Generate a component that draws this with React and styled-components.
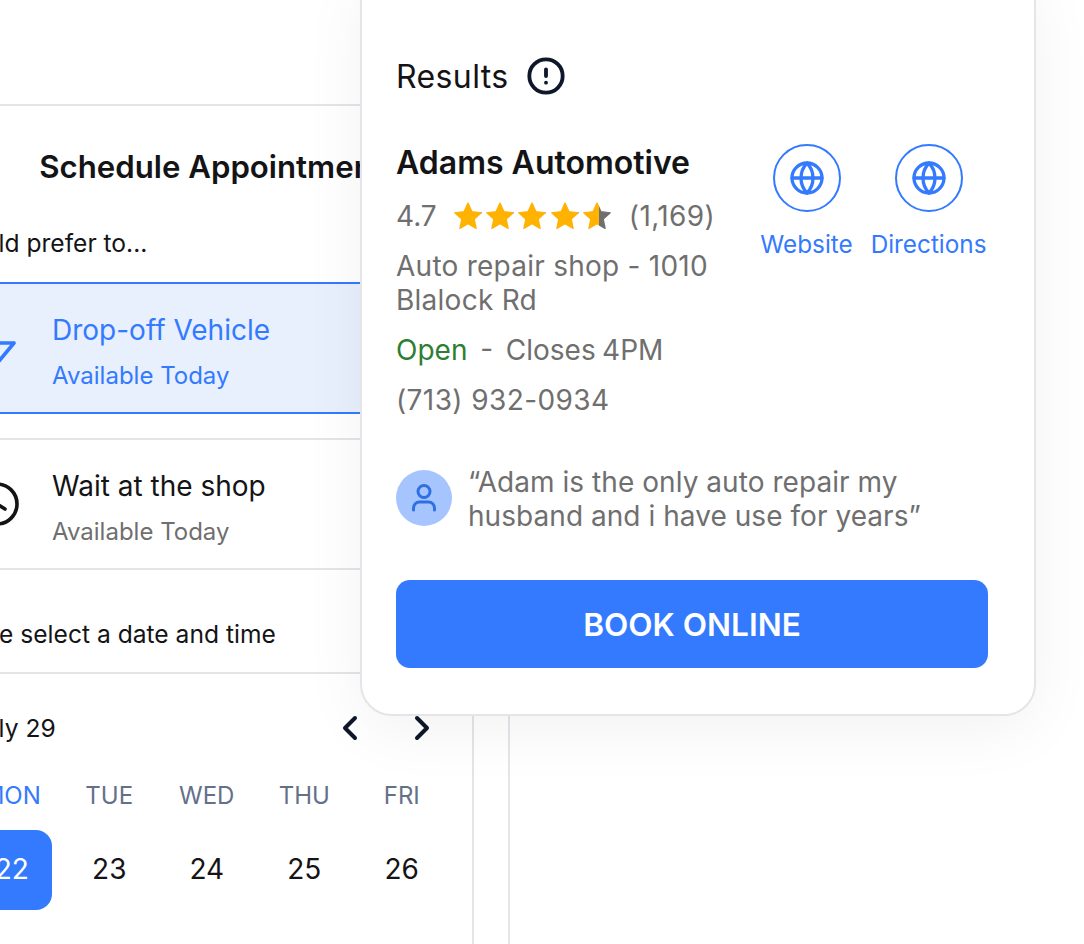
import React from "react";
import styled, { createGlobalStyle } from "styled-components";
import { ChevronLeft, ChevronRight, CircleAlert, Globe } from "lucide-react";

const BLUE = "#337aff";
const INK = "#141416";
const GREY = "#6f6f6f";
const NAVY = "#0f172a";
const LINE = "#e4e4e9";

const GlobalStyle = createGlobalStyle`
  html, body {
    margin: 0;
    background: #fff;
  }
  * {
    box-sizing: border-box;
  }
`;

const Stage = styled.div`
  position: relative;
  width: 1084px;
  height: 944px;
  overflow: hidden;
  font-family: Inter, "Liberation Sans", sans-serif;
  color: ${INK};
`;

const Backdrop = styled.div`
  display: flex;
  width: 510px;
  height: 100%;
  padding-top: 104px;
  padding-right: 34px;
  border-right: 2px solid ${LINE};
`;

const Sheet = styled.section`
  flex: none;
  width: 540px;
  margin-left: -66px;
  border-top: 2px solid ${LINE};
  border-right: 2px solid ${LINE};
`;

const SheetTitle = styled.h2`
  margin: 0;
  padding: 43px 0 0 17px;
  font-size: 31.2px;
  line-height: 36px;
  font-weight: 600;
  text-align: center;
  white-space: nowrap;
`;

const Prompt = styled.p`
  margin: 42px 0 23px;
  padding-left: 2px;
  font-size: 24.6px;
  line-height: 32px;
  white-space: nowrap;
`;

const OptionList = styled.div`
  display: flex;
  flex-direction: column;
  gap: 24px;
`;

const Option = styled.div`
  display: flex;
  align-items: center;
  gap: 32px;
  height: 132px;
  padding-left: 38px;
  border-top: 2px solid ${({ $active }) => ($active ? BLUE : LINE)};
  border-bottom: 2px solid ${({ $active }) => ($active ? BLUE : LINE)};
  background: ${({ $active }) => ($active ? "#e8f0fe" : "transparent")};
  color: ${({ $active }) => ($active ? BLUE : INK)};
`;

const OptionIcon = styled.svg`
  flex: none;
  width: 48px;
  height: 48px;
  fill: none;
  stroke: currentColor;
  stroke-width: 3.6;
  stroke-linecap: round;
  stroke-linejoin: round;
`;

const OptionText = styled.div`
  display: flex;
  flex-direction: column;
  gap: 12px;
  padding-top: 8px;
`;

const OptionTitle = styled.div`
  font-size: 28px;
  line-height: 36px;
  white-space: nowrap;
`;

const OptionSub = styled.div`
  font-size: 24px;
  line-height: 32px;
  white-space: nowrap;
  color: ${({ $active }) => ($active ? BLUE : GREY)};
`;

const DateHeading = styled.div`
  padding: 48px 0 22px 2px;
  border-bottom: 2px solid ${LINE};
  font-size: 24.6px;
  line-height: 32px;
  white-space: nowrap;
`;

const Calendar = styled.div`
  padding: 34px 30px 0 29px;
`;

const MonthRow = styled.div`
  display: flex;
  align-items: center;
  justify-content: space-between;
  height: 40px;
  padding-left: 7px;
  font-size: 24.6px;
  white-space: nowrap;
`;

const MonthNav = styled.div`
  display: flex;
  gap: 32px;
  color: ${NAVY};
`;

const DayGrid = styled.div`
  display: grid;
  grid-template-columns: repeat(5, 97.5px);
  justify-items: center;
  margin-top: 32px;
  row-gap: 18px;
`;

const WeekDay = styled.div`
  font-size: 24px;
  line-height: 32px;
  color: ${({ $active }) => ($active ? BLUE : "#64708a")};
`;

const DayCell = styled.div`
  display: flex;
  align-items: center;
  justify-content: center;
  width: 80px;
  height: 80px;
  padding-bottom: 2px;
  border-radius: 16px;
  font-size: 28px;
  background: ${({ $active }) => ($active ? BLUE : "transparent")};
  color: ${({ $active }) => ($active ? "#fff" : INK)};
`;

const ResultsCard = styled.aside`
  position: absolute;
  top: -30px;
  left: 360px;
  width: 676px;
  height: 746px;
  padding: 86px 46px 0 34px;
  background: #fff;
  border: 2px solid ${LINE};
  border-radius: 32px;
  box-shadow: 0 14px 64px rgba(20, 20, 40, 0.055);
`;

const ResultsHeader = styled.div`
  display: flex;
  align-items: center;
  gap: 17px;
  height: 36px;
  font-size: 32px;
  letter-spacing: 0.4px;
  color: ${INK};
`;

const Listing = styled.div`
  display: flex;
  justify-content: space-between;
  margin-top: 51px;
`;

const Details = styled.div`
  width: 330px;
`;

const ShopName = styled.h3`
  margin: 0;
  font-size: 32px;
  line-height: 36px;
  font-weight: 600;
`;

const RatingRow = styled.div`
  display: flex;
  align-items: center;
  height: 34px;
  margin-top: 18px;
  font-size: 28px;
  color: ${GREY};
`;

const Stars = styled.div`
  display: flex;
  gap: 2.3px;
  margin: 0 17px 0 16px;
`;

const ReviewCount = styled.span`
  letter-spacing: 0.4px;
`;

const GreyLine = styled.div`
  margin-top: 16px;
  font-size: 28px;
  line-height: 34px;
  letter-spacing: ${({ $spacing }) => $spacing || "0"};
  word-spacing: ${({ $wordSpacing }) => $wordSpacing || "0"};
  color: ${GREY};
  white-space: pre-wrap;
`;

const OpenLabel = styled.span`
  color: #2e7d32;
`;

const Actions = styled.div`
  display: flex;
  gap: 18px;
  margin: -1px 1.5px 0 0;
`;

const Action = styled.div`
  display: flex;
  flex-direction: column;
  align-items: center;
  gap: 16px;
  color: ${BLUE};
  font-size: 24.3px;
  line-height: 32px;
`;

const ActionCircle = styled.div`
  display: flex;
  align-items: center;
  justify-content: center;
  width: 68px;
  height: 68px;
  border: 2px solid ${BLUE};
  border-radius: 50%;
`;

const Review = styled.div`
  display: flex;
  align-items: center;
  gap: 16px;
  margin-top: 48px;
`;

const Avatar = styled.div`
  flex: none;
  display: flex;
  align-items: center;
  justify-content: center;
  width: 56px;
  height: 56px;
  margin-top: -2px;
  border-radius: 50%;
  background: #a6c5ff;
  color: #2f6fe0;
`;

const Quote = styled.div`
  font-size: 28px;
  line-height: 34px;
  letter-spacing: 0.05px;
  color: ${GREY};
`;

const BookButton = styled.div`
  display: flex;
  align-items: center;
  justify-content: center;
  width: 592px;
  height: 88px;
  margin-top: 47px;
  border-radius: 14px;
  background: ${BLUE};
  color: #fff;
  font-size: 31.6px;
  font-weight: 600;
`;

const STAR = "M12 1.6l3.1 6.9 7.5.9-5.6 5.1 1.5 7.4L12 18.2l-6.5 3.7L7 14.5 1.4 9.4l7.5-.9z";

function Star({ id, fill }) {
  return (
    <svg width="30" height="30" viewBox="0 0 24 24">
      <defs>
        <linearGradient id={id}>
          <stop offset={`${fill}%`} stopColor="#ffb300" />
          <stop offset={`${fill}%`} stopColor="#6f6f6f" />
        </linearGradient>
      </defs>
      <path d={STAR} fill={`url(#${id})`} stroke={`url(#${id})`} strokeWidth="1" strokeLinejoin="round" />
    </svg>
  );
}

function PersonIcon() {
  return (
    <svg width="32" height="32" viewBox="0 0 32 32" fill="none" stroke="currentColor" strokeWidth="3" strokeLinecap="round">
      <circle cx="16" cy="9.5" r="6" />
      <path d="M5.5 28v-2a6 6 0 0 1 6-6h9a6 6 0 0 1 6 6v2" />
    </svg>
  );
}

const days = [
  { name: "MON", date: 22, active: true },
  { name: "TUE", date: 23 },
  { name: "WED", date: 24 },
  { name: "THU", date: 25 },
  { name: "FRI", date: 26 },
];

export default function App() {
  return (
    <Stage>
      <GlobalStyle />
      <Backdrop>
        <Sheet>
          <SheetTitle>Schedule Appointment</SheetTitle>
          <Prompt>I would prefer to...</Prompt>
          <OptionList>
            <Option $active>
              <OptionIcon viewBox="0 0 48 48">
                <path d="M42 19 L6 19 M42 19 L27 37" />
              </OptionIcon>
              <OptionText>
                <OptionTitle>Drop-off Vehicle</OptionTitle>
                <OptionSub $active>Available Today</OptionSub>
              </OptionText>
            </Option>
            <Option>
              <OptionIcon viewBox="0 0 48 48">
                <circle cx="25" cy="24" r="20" />
                <path d="M25 24 L33 29" />
              </OptionIcon>
              <OptionText>
                <OptionTitle>Wait at the shop</OptionTitle>
                <OptionSub>Available Today</OptionSub>
              </OptionText>
            </Option>
          </OptionList>
          <DateHeading>Please select a date and time</DateHeading>
          <Calendar>
            <MonthRow>
              <span>July 29</span>
              <MonthNav>
                <ChevronLeft size={40} strokeWidth={2.4} />
                <ChevronRight size={40} strokeWidth={2.4} />
              </MonthNav>
            </MonthRow>
            <DayGrid>
              {days.map((day) => (
                <WeekDay key={day.name} $active={day.active}>
                  {day.name}
                </WeekDay>
              ))}
              {days.map((day) => (
                <DayCell key={day.date} $active={day.active}>
                  {day.date}
                </DayCell>
              ))}
            </DayGrid>
          </Calendar>
        </Sheet>
      </Backdrop>

      <ResultsCard>
        <ResultsHeader>
          Results
          <CircleAlert size={40} strokeWidth={2.3} color={NAVY} />
        </ResultsHeader>
        <Listing>
          <Details>
            <ShopName>Adams Automotive</ShopName>
            <RatingRow>
              4.7
              <Stars>
                {[100, 100, 100, 100, 57].map((fill, index) => (
                  <Star key={index} id={`star-${index}`} fill={fill} />
                ))}
              </Stars>
              <ReviewCount>(1,169)</ReviewCount>
            </RatingRow>
            <GreyLine $spacing="0.25px">Auto repair shop - 1010 Blalock Rd</GreyLine>
            <GreyLine $wordSpacing="-1.5px">
              <OpenLabel>Open</OpenLabel>
              {"  -  Closes 4PM"}
            </GreyLine>
            <GreyLine $spacing="0.4px">(713) 932-0934</GreyLine>
          </Details>
          <Actions>
            <Action>
              <ActionCircle>
                <Globe size={36} strokeWidth={2.2} />
              </ActionCircle>
              Website
            </Action>
            <Action>
              <ActionCircle>
                <Globe size={36} strokeWidth={2.2} />
              </ActionCircle>
              Directions
            </Action>
          </Actions>
        </Listing>
        <Review>
          <Avatar>
            <PersonIcon />
          </Avatar>
          <Quote>
            “Adam is the only auto repair my
            <br />
            husband and i have use for years”
          </Quote>
        </Review>
        <BookButton>BOOK ONLINE</BookButton>
      </ResultsCard>
    </Stage>
  );
}
